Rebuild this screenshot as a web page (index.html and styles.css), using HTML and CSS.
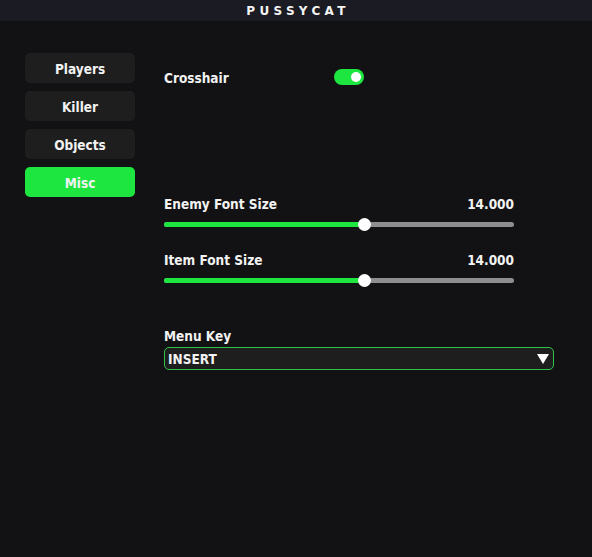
FILE: index.html
```html
<!DOCTYPE html>
<html>
<head>
<meta charset="utf-8">
<link rel="stylesheet" href="styles.css">
</head>
<body>
<div class="titlebar">PUSSYCAT</div>
<div class="main">
  <nav class="sidebar">
    <div class="tab">Players</div>
    <div class="tab">Killer</div>
    <div class="tab">Objects</div>
    <div class="tab active">Misc</div>
  </nav>
  <section class="content">
    <div class="row toggle-row">
      <span class="label">Crosshair</span>
      <span class="toggle"><span class="knob"></span></span>
    </div>
    <div class="slider-block first">
      <div class="slider-head"><span>Enemy Font Size</span><span>14.000</span></div>
      <div class="track"><div class="fill" style="width:57%"></div><div class="thumb" style="left:57%"></div></div>
    </div>
    <div class="slider-block">
      <div class="slider-head"><span>Item Font Size</span><span>14.000</span></div>
      <div class="track"><div class="fill" style="width:57%"></div><div class="thumb" style="left:57%"></div></div>
    </div>
    <div class="combo-block">
      <div class="combo-label">Menu Key</div>
      <div class="combo"><span>INSERT</span><span class="arrow"></span></div>
    </div>
  </section>
</div>
</body>
</html>
```
FILE: styles.css
```css
html, body {
  margin: 0;
  padding: 0;
  background: #121214;
  color: #f2f2f2;
  font-family: "DejaVu Sans Condensed", "DejaVu Sans", Verdana, sans-serif;
  font-stretch: condensed;
  font-weight: bold;
  font-size: 13.5px;
}
.titlebar {
  height: 21px;
  background: #1b1b23;
  text-align: center;
  line-height: 23px;
  font-family: "DejaVu Sans", Verdana, sans-serif;
  font-stretch: normal;
  font-size: 12px;
  letter-spacing: 4.3px;
  padding-left: 4px;
  color: #f4f4f4;
}
.main {
  display: flex;
  padding-top: 32px;
}
.sidebar {
  display: flex;
  flex-direction: column;
  gap: 8px;
  margin-left: 25px;
  width: 110px;
}
.tab {
  height: 30px;
  line-height: 32px;
  text-align: center;
  background: #1e1e1f;
  border-radius: 5px;
}
.tab.active {
  background: #1ee640;
}
.content {
  margin-left: 29px;
  width: 390px;
}
.toggle-row {
  display: flex;
  align-items: center;
  width: 200px;
  justify-content: space-between;
  margin-top: 16px;
  height: 16px;
}
.label {
  padding-top: 2px;
}
.toggle {
  width: 30px;
  height: 16px;
  border-radius: 8px;
  background: #1ee640;
  position: relative;
}
.knob {
  position: absolute;
  width: 10px;
  height: 10px;
  border-radius: 50%;
  background: #fff;
  right: 3px;
  top: 3px;
}
.slider-block {
  width: 350px;
}
.slider-block.first {
  margin-top: 112px;
}
.slider-block + .slider-block {
  margin-top: 26px;
}
.slider-head {
  display: flex;
  justify-content: space-between;
  height: 16px;
  line-height: 14px;
}
.track {
  position: relative;
  height: 5px;
  border-radius: 3px;
  background: #8e8e8e;
  margin-top: 9px;
}
.fill {
  height: 5px;
  border-radius: 3px;
  background: #1ee640;
}
.thumb {
  position: absolute;
  top: -4px;
  width: 13px;
  height: 13px;
  margin-left: -6px;
  border-radius: 50%;
  background: #fff;
}
.combo-block {
  margin-top: 45px;
}
.combo-label {
  height: 16px;
  line-height: 16px;
}
.combo {
  margin-top: 3px;
  height: 21px;
  border: 1px solid #2fc447;
  border-radius: 5px;
  background: #1e1e1f;
  display: flex;
  align-items: center;
  justify-content: space-between;
  padding: 0 4px 0 3px;
  box-sizing: content-box;
  width: 381px;
}
.arrow {
  width: 0;
  height: 0;
  border-left: 6px solid transparent;
  border-right: 6px solid transparent;
  border-top: 10px solid #fff;
}
```
